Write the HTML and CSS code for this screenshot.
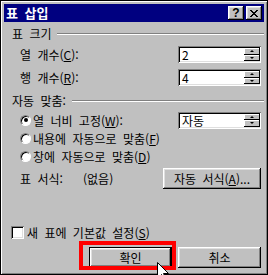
FILE: index.html
```html
<!DOCTYPE html>
<html lang="ko">
<head>
    <meta charset="UTF-8">
    <title>표 삽입</title>
    <link rel="stylesheet" href="styles.css">
</head>
<body>

    <div class="window">
        <!-- Barra del titolo -->
        <div class="titlebar">
            <span class="title">표 삽입</span>
            <div class="caption-buttons">
                <span class="cap-btn">?</span>
                <span class="cap-btn">
                    <svg width="8" height="7" viewBox="0 0 8 7" shape-rendering="crispEdges">
                        <path d="M0 0h2v1h-2zM6 0h2v1h-2zM1 1h2v1h-2zM5 1h2v1h-2zM2 2h4v1h-4zM3 3h2v1h-2zM2 4h4v1h-4zM1 5h2v1h-2zM5 5h2v1h-2zM0 6h2v1h-2zM6 6h2v1h-2z" fill="#000"/>
                    </svg>
                </span>
            </div>
        </div>

        <div class="content">
            <!-- Dimensioni -->
            <div class="group-title first"><span>표 크기</span><span class="rule"></span></div>
            <div class="field-row row-a">
                <span>열 개수(<u>C</u>):</span>
                <div class="spin"><span class="value">2</span><div class="arrows"><span class="arr up"></span><span class="arr down"></span></div></div>
            </div>
            <div class="field-row row-b">
                <span>행 개수(<u>R</u>):</span>
                <div class="spin"><span class="value">4</span><div class="arrows"><span class="arr up"></span><span class="arr down"></span></div></div>
            </div>

            <!-- Adattamento -->
            <div class="group-title second"><span>자동 맞춤:</span><span class="rule"></span></div>
            <div class="radio-row first-radio">
                <span class="radio checked"></span>
                <span>열 너비 고정(<u>W</u>):</span>
                <div class="spin"><span class="value">자동</span><div class="arrows"><span class="arr up"></span><span class="arr down"></span></div></div>
            </div>
            <div class="radio-row">
                <span class="radio"></span>
                <span>내용에 자동으로 맞춤(<u>F</u>)</span>
            </div>
            <div class="radio-row">
                <span class="radio"></span>
                <span>창에 자동으로 맞춤(<u>D</u>)</span>
            </div>

            <div class="format-row">
                <span class="format-label">표 서식:</span>
                <span>(없음)</span>
                <span class="btn format-btn">자동 서식(<u>A</u>)...</span>
            </div>

            <div class="check-row">
                <span class="checkbox"></span>
                <span>새 표에 기본값 설정(<u>S</u>)</span>
            </div>

            <div class="button-row">
                <span class="btn default">확인</span>
                <span class="btn">취소</span>
            </div>
        </div>

        <!-- Evidenziazione e puntatore -->
        <div class="highlight"></div>
        <svg class="cursor" width="13" height="20" viewBox="0 0 13 20">
            <path d="M0.5 0.5 L0.5 16.5 L4.5 12.5 L7.5 18.5 L9.5 17.5 L6.5 11.5 L11.5 11.5 Z" fill="#fff" stroke="#000" stroke-width="1"/>
        </svg>
    </div>

</body>
</html>
```

FILE: styles.css
```css
body {
    margin: 0;
    background-color: #c0c0c0;
    font-family: "Noto Sans CJK KR", sans-serif;
    font-size: 12px;
    word-spacing: 3px;
    color: #000;
}
.window {
    position: relative;
    width: 268px;
    height: 275px;
    box-sizing: border-box;
    border: 1px solid #000;
    padding: 3px;
    background-color: #c0c0c0;
    box-shadow: inset 1px 1px #fff, inset -1px -1px #808080;
    display: flex;
    flex-direction: column;
}
.titlebar {
    height: 18px;
    background-color: #000080;
    color: #fff;
    display: flex;
    align-items: center;
    justify-content: space-between;
    padding: 0 2px;
}
.title {
    font-size: 13px;
    font-weight: bold;
    line-height: 18px;
}
.caption-buttons {
    display: flex;
    gap: 2px;
}
.cap-btn {
    width: 16px;
    height: 14px;
    box-sizing: border-box;
    background-color: #c0c0c0;
    box-shadow: inset -1px -1px #000, inset 1px 1px #fff, inset -2px -2px #808080, inset 2px 2px #dfdfdf;
    color: #000;
    font-family: "Liberation Sans", sans-serif;
    font-weight: bold;
    font-size: 12px;
    line-height: 14px;
    text-align: center;
    display: flex;
    align-items: center;
    justify-content: center;
}
.content {
    display: flex;
    flex-direction: column;
    padding: 0 3px 0 8px;
}
u {
    text-decoration-thickness: 1px;
    text-underline-offset: 1px;
}
.group-title {
    height: 14px;
    line-height: 14px;
    display: flex;
    align-items: center;
}
.group-title.first {
    margin-top: 5px;
}
.group-title.second {
    margin-top: 8px;
}
.rule {
    flex: 1;
    height: 0;
    margin-left: 6px;
    margin-right: -3px;
    border-top: 1px solid #808080;
    border-bottom: 1px solid #fff;
}
.field-row {
    height: 17px;
    margin-left: 8px;
    display: flex;
    align-items: center;
    justify-content: space-between;
}
.row-a {
    margin-top: 5px;
}
.row-b {
    margin-top: 6px;
}
.spin {
    width: 83px;
    height: 17px;
    box-sizing: border-box;
    padding: 2px 1px 2px 4px;
    background-color: #fff;
    box-shadow: inset 1px 1px #808080, inset -1px -1px #fff, inset 2px 2px #000, inset -2px -2px #dfdfdf;
    display: flex;
    align-items: center;
}
.spin .value {
    line-height: 13px;
}
.arrows {
    margin-left: auto;
    width: 16px;
    height: 13px;
    display: flex;
    flex-direction: column;
}
.arr {
    flex: 1;
    background-color: #c0c0c0;
    box-shadow: inset -1px -1px #000, inset 1px 1px #fff;
    display: flex;
    align-items: center;
    justify-content: center;
}
.arr::after {
    content: "";
    border-left: 2px solid transparent;
    border-right: 2px solid transparent;
}
.arr.up::after {
    border-bottom: 2px solid #000;
}
.arr.down::after {
    border-top: 2px solid #000;
}
.radio-row {
    height: 18px;
    margin-left: 8px;
    display: flex;
    align-items: center;
}
.first-radio {
    margin-top: 3px;
}
.radio {
    width: 11px;
    height: 11px;
    box-sizing: border-box;
    margin-right: 2px;
    border-radius: 50%;
    background-color: #fff;
    border: 1px solid;
    border-color: #808080 #fff #fff #808080;
    box-shadow: inset 1px 1px #000;
    display: flex;
    align-items: center;
    justify-content: center;
}
.radio.checked::after {
    content: "";
    width: 4px;
    height: 4px;
    border-radius: 50%;
    background-color: #000;
}
.first-radio .spin {
    margin-left: auto;
}
.format-row {
    height: 21px;
    margin-top: 3px;
    margin-left: 8px;
    display: flex;
    align-items: center;
}
.format-label {
    width: 63px;
}
.btn {
    height: 21px;
    box-sizing: border-box;
    background-color: #c0c0c0;
    box-shadow: inset -1px -1px #000, inset 1px 1px #fff, inset -2px -2px #808080, inset 2px 2px #dfdfdf;
    display: flex;
    align-items: center;
    justify-content: center;
}
.format-btn {
    width: 98px;
    margin-left: auto;
}
.check-row {
    height: 14px;
    margin-top: 36px;
    margin-left: -1px;
    display: flex;
    align-items: center;
}
.checkbox {
    width: 13px;
    height: 13px;
    box-sizing: border-box;
    margin-right: 3px;
    background-color: #fff;
    box-shadow: inset 1px 1px #808080, inset -1px -1px #fff, inset 2px 2px #000, inset -2px -2px #dfdfdf;
}
.button-row {
    margin-top: 8px;
    display: flex;
    justify-content: flex-end;
    gap: 6px;
}
.button-row .btn {
    width: 83px;
}
.btn.default {
    border: 1px solid #000;
}
.highlight {
    position: absolute;
    left: 78px;
    top: 240px;
    width: 97px;
    height: 29px;
    box-sizing: border-box;
    border: 4px solid #ff0000;
}
.cursor {
    position: absolute;
    left: 156px;
    top: 261px;
}
```
